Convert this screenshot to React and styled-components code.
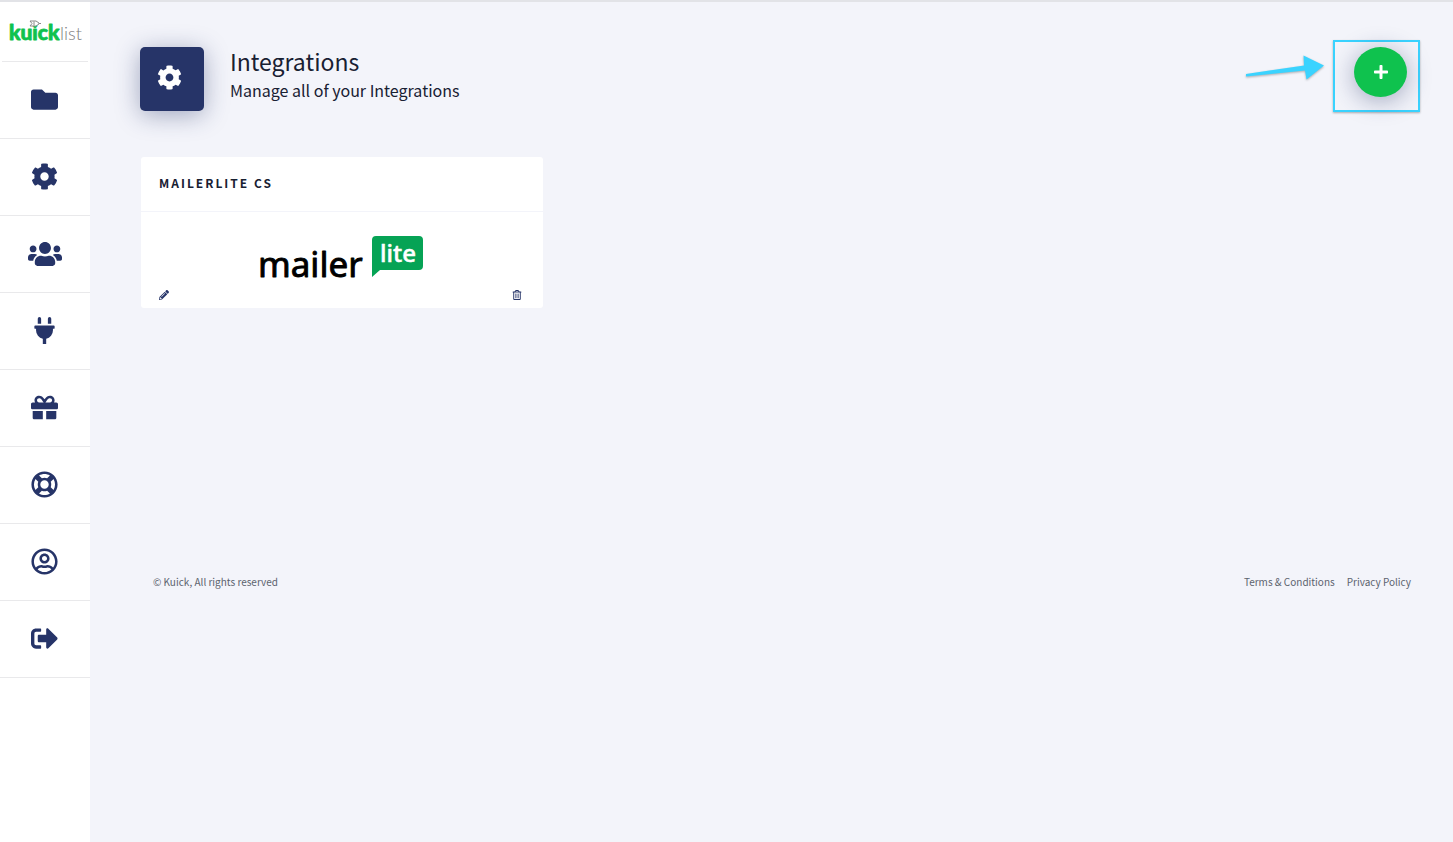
import React from 'react';
import styled, { createGlobalStyle } from 'styled-components';
import {
  FaFolder,
  FaCog,
  FaUsers,
  FaPlug,
  FaGift,
  FaRegLifeRing,
  FaRegUserCircle,
  FaSignOutAlt,
  FaPlus,
  FaPencilAlt,
  FaRegTrashAlt,
} from 'react-icons/fa';

const COLORS = {
  navy: '#263468',
  green: '#0fc24e',
  mailerGreen: '#06a355',
  background: '#f3f4fa',
  border: '#e9e9eb',
  highlight: '#3ad3ff',
  textDark: '#182032',
  textLight: '#5c636e',
};

const GlobalStyle = createGlobalStyle`
  * {
    box-sizing: border-box;
  }
  body {
    margin: 0;
    background-color: ${COLORS.background};
    color: ${COLORS.textDark};
    font-family: 'Noto Sans CJK SC', 'Open Sans', sans-serif;
  }
  a {
    color: inherit;
    text-decoration: none;
  }
  button {
    padding: 0;
    border: none;
    background: none;
    font: inherit;
    cursor: pointer;
  }
`;

const Page = styled.div`
  display: flex;
  min-height: 100vh;
  border-top: 2px solid #e2e3e7;
`;

const Sidebar = styled.nav`
  flex: 0 0 90px;
  background-color: #fff;
`;

const Brand = styled.a`
  display: flex;
  align-items: center;
  justify-content: center;
  height: 60px;
  margin: 0 2px;
  border-bottom: 1px solid ${COLORS.border};
`;

const BrandLogo = styled.svg`
  display: block;
  width: 80px;
  height: 28px;
  overflow: visible;
`;

const NavList = styled.ul`
  margin: 0;
  padding: 0;
  list-style: none;
`;

const NavLink = styled.a`
  display: flex;
  align-items: center;
  justify-content: center;
  height: 77px;
  padding: 0 1px 1px 0;
  border-bottom: 1px solid ${COLORS.border};
  color: ${COLORS.navy};
  font-size: ${({ $wide }) => ($wide ? 34 : 27)}px;
`;

const Main = styled.main`
  flex: 1;
  min-width: 0;
  padding: 45px 33px 0 50px;
`;

const PageHeader = styled.header`
  display: flex;
  align-items: flex-start;
`;

const HeaderIcon = styled.div`
  display: flex;
  align-items: center;
  justify-content: center;
  width: 64px;
  height: 64px;
  padding: 0 5px 3px 0;
  border-radius: 5px;
  background-color: ${COLORS.navy};
  box-shadow: 0 4px 25px rgba(38, 52, 104, 0.4);
  color: #fff;
  font-size: 25px;
`;

const HeaderText = styled.div`
  margin-left: 26px;
`;

const Title = styled.h1`
  margin: 0;
  font-size: 23px;
  font-weight: 400;
  line-height: 28px;
`;

const Subtitle = styled.p`
  margin: 0;
  font-size: 16px;
  line-height: 30px;
`;

const AddArea = styled.div`
  display: flex;
  align-items: flex-start;
  margin: -7px 0 -8px auto;
`;

const Arrow = styled.svg`
  width: 84px;
  height: 40px;
  margin: 10px 4px 0 0;
  overflow: visible;
  filter: drop-shadow(0 1px 1px rgba(0, 0, 0, 0.3));
`;

const Highlight = styled.div`
  display: flex;
  align-items: flex-start;
  justify-content: flex-end;
  width: 87px;
  height: 72px;
  padding: 5px 11px;
  border: 2px solid ${COLORS.highlight};
  box-shadow: 0 1px 2px rgba(0, 0, 0, 0.3);
`;

const AddButton = styled.button`
  display: flex;
  align-items: center;
  justify-content: center;
  width: 53px;
  height: 50px;
  border-radius: 50%;
  background-color: ${COLORS.green};
  box-shadow: 0 4px 25px rgba(38, 52, 104, 0.4);
  color: #fff;
  font-size: 16px;
`;

const CardGrid = styled.section`
  display: grid;
  grid-template-columns: repeat(auto-fill, 402px);
  gap: 24px;
  min-height: 415px;
  margin: 46px 0 0 1px;
  align-items: start;
`;

const Card = styled.article`
  border-radius: 3px;
  background-color: #fff;
`;

const CardTitle = styled.h2`
  margin: 0;
  padding: 16px 18px 18px;
  border-bottom: 1px solid ${COLORS.background};
  font-size: 12px;
  font-weight: 700;
  line-height: 20px;
  letter-spacing: 2px;
  text-transform: uppercase;
`;

const CardBody = styled.div`
  padding: 20px 18px 4px;
`;

const MailerLogo = styled.svg`
  display: block;
  width: 174px;
  height: 54px;
  margin: 0 auto;
  overflow: visible;
`;

const CardActions = styled.div`
  display: flex;
  justify-content: space-between;
  padding-right: 3px;
`;

const IconButton = styled.button`
  display: flex;
  align-items: center;
  height: 18px;
  color: ${COLORS.navy};
  font-size: 10px;
`;

const Footer = styled.footer`
  display: flex;
  justify-content: space-between;
  padding: 0 9px 0 13px;
  color: ${COLORS.textLight};
  font-size: 10px;
  line-height: 20px;
`;

const FooterLinks = styled.div`
  display: flex;
  gap: 12px;
`;

const navItems = [
  { label: 'Folders', icon: FaFolder },
  { label: 'Settings', icon: FaCog },
  { label: 'Users', icon: FaUsers, wide: true },
  { label: 'Plugins', icon: FaPlug },
  { label: 'Gifts', icon: FaGift },
  { label: 'Support', icon: FaRegLifeRing },
  { label: 'Profile', icon: FaRegUserCircle },
  { label: 'Sign out', icon: FaSignOutAlt },
];

const App = () => {
  return (
    <>
      <GlobalStyle />
      <Page>
        <Sidebar>
          <Brand href="#">
            <BrandLogo viewBox="0 0 80 28">
              <text
                x="4"
                y="22"
                fontFamily="Lato, sans-serif"
                fontWeight="900"
                fontSize="21"
                fill={COLORS.green}
                stroke={COLORS.green}
                strokeWidth="0.8"
                strokeLinejoin="round"
              >
                kuick
              </text>
              <text x="55" y="22" fontFamily="Lato, sans-serif" fontWeight="300" fontSize="18" fill="#7d7d7d">
                list
              </text>
              <path d="M25 3h6l3 2v1l-3 2h-6l2-2.5zM29 3.5v4M34 5.5h2" fill="#fff" stroke="#8a8a8a" />
            </BrandLogo>
          </Brand>
          <NavList>
            {navItems.map(({ label, icon: Icon, wide }) => (
              <li key={label}>
                <NavLink href="#" aria-label={label} $wide={wide}>
                  <Icon />
                </NavLink>
              </li>
            ))}
          </NavList>
        </Sidebar>

        <Main>
          <PageHeader>
            <HeaderIcon>
              <FaCog />
            </HeaderIcon>
            <HeaderText>
              <Title>Integrations</Title>
              <Subtitle>Manage all of your Integrations</Subtitle>
            </HeaderText>
            <AddArea>
              <Arrow viewBox="0 0 84 40">
                <path d="M1 24L59 15.5L58.5 5.5L79 15.5L61.500 29.5L60 20.5L1 26.5Z" fill={COLORS.highlight} />
              </Arrow>
              <Highlight>
                <AddButton type="button" aria-label="Add integration">
                  <FaPlus />
                </AddButton>
              </Highlight>
            </AddArea>
          </PageHeader>

          <CardGrid>
            <Card>
              <CardTitle>MailerLite CS</CardTitle>
              <CardBody>
                <MailerLogo viewBox="0 0 174 54">
                  <text
                    x="3"
                    y="45"
                    fontFamily="'Noto Sans', sans-serif"
                    fontSize="35"
                    stroke="#000"
                    strokeWidth="0.9"
                    strokeLinejoin="round"
                  >
                    mailer
                  </text>
                  <path
                    d="M121 4h43a4 4 0 0 1 4 4v26a4 4 0 0 1-4 4h-39l-8 7v-37a4 4 0 0 1 4-4z"
                    fill={COLORS.mailerGreen}
                  />
                  <text
                    x="125"
                    y="30"
                    fontFamily="'Noto Sans', sans-serif"
                    fontWeight="500"
                    fontSize="24"
                    fill="#fff"
                    stroke="#fff"
                    strokeWidth="0.5"
                    strokeLinejoin="round"
                  >
                    lite
                  </text>
                </MailerLogo>
                <CardActions>
                  <IconButton type="button" aria-label="Edit">
                    <FaPencilAlt />
                  </IconButton>
                  <IconButton type="button" aria-label="Delete">
                    <FaRegTrashAlt />
                  </IconButton>
                </CardActions>
              </CardBody>
            </Card>
          </CardGrid>

          <Footer>
            <span>© Kuick, All rights reserved</span>
            <FooterLinks>
              <a href="#">Terms &amp; Conditions</a>
              <a href="#">Privacy Policy</a>
            </FooterLinks>
          </Footer>
        </Main>
      </Page>
    </>
  );
};

export default App;
